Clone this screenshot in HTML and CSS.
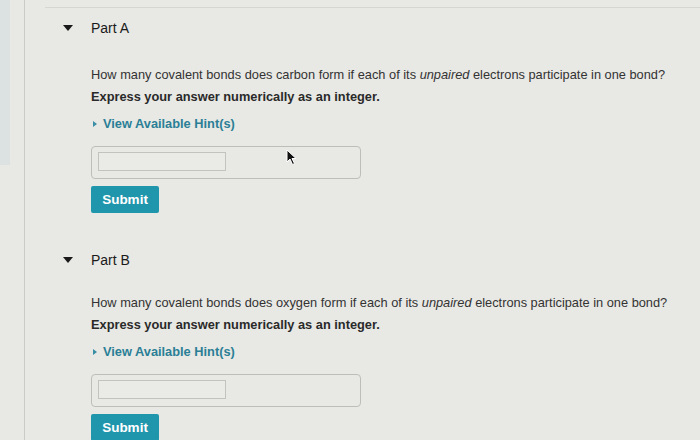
FILE: index.html
```html
<!DOCTYPE html>
<html>
<head>
<meta charset="utf-8">
<link rel="stylesheet" href="styles.css">
</head>
<body>
<div class="page">
  <div class="sidebar"><div class="strip"></div></div>
  <div class="main">
    <section class="part">
      <div class="part-head"><span class="caret"></span><span class="part-title">Part A</span></div>
      <div class="part-body">
        <p class="question">How many covalent bonds does carbon form if each of its <em>unpaired</em> electrons participate in one bond?</p>
        <p class="instr">Express your answer numerically as an integer.</p>
        <p class="hint"><span class="hint-caret"></span>View Available Hint(s)</p>
        <div class="answer-box"><div class="answer-input"></div></div>
        <button class="submit">Submit</button>
      </div>
      <svg class="cursor" width="12" height="17" viewBox="0 0 12 17"><path d="M1 1 L1 13 L4 10 L6.5 15.5 L8.5 14.5 L6 9.5 L10 9.5 Z" fill="#111" stroke="#fff" stroke-width="1"/></svg>
    </section>
    <section class="part part-b">
      <div class="part-head"><span class="caret"></span><span class="part-title">Part B</span></div>
      <div class="part-body">
        <p class="question">How many covalent bonds does oxygen form if each of its <em>unpaired</em> electrons participate in one bond?</p>
        <p class="instr">Express your answer numerically as an integer.</p>
        <p class="hint"><span class="hint-caret"></span>View Available Hint(s)</p>
        <div class="answer-box"><div class="answer-input"></div></div>
        <button class="submit">Submit</button>
      </div>
    </section>
  </div>
</div>
</body>
</html>
```
FILE: styles.css
```css
html, body {
  margin: 0;
  padding: 0;
  background: #e8e8e4;
  height: 100%;
  overflow: hidden;
}
body {
  font-family: "Liberation Sans", Arial, sans-serif;
  color: #222;
}
.page {
  display: flex;
  height: 440px;
}
.sidebar {
  width: 24px;
  border-right: 1px solid #cacbc8;
  flex: none;
}
.strip {
  width: 10px;
  height: 165px;
  background: #dce2e2;
}
.main {
  flex: 1;
  margin-left: 20px;
  border-top: 1px solid #d6d6d2;
  margin-top: 7px;
  padding-top: 10px;
}
.part {
  position: relative;
}
.part-head {
  display: flex;
  align-items: center;
  height: 20px;
  padding-left: 18px;
}
.caret {
  width: 0;
  height: 0;
  border-left: 5px solid transparent;
  border-right: 5px solid transparent;
  border-top: 6px solid #1a1a1a;
  margin-right: 18px;
}
.part-title {
  font-size: 14px;
  color: #1a1a1a;
}
.part-body {
  padding-left: 46px;
  padding-top: 26px;
}
.question, .instr, .hint {
  margin: 0;
  font-size: 12.8px;
  line-height: 22px;
}
.question {
  color: #333;
}
.instr {
  font-weight: bold;
  color: #2a2a2a;
}
.hint {
  margin-top: 5px;
  font-weight: bold;
  color: #2a7f96;
  display: flex;
  align-items: center;
}
.hint-caret {
  width: 0;
  height: 0;
  border-top: 3.5px solid transparent;
  border-bottom: 3.5px solid transparent;
  border-left: 4px solid #3a8ea5;
  margin-left: 2px;
  margin-right: 6px;
}
.answer-box {
  margin-top: 11px;
  width: 256px;
  height: 21px;
  padding: 5px 6px;
  border: 1px solid #bdbdba;
  border-radius: 4px;
}
.answer-input {
  width: 126px;
  height: 17px;
  border: 1px solid #c2c2be;
  background: #eaeae6;
}
.submit {
  display: block;
  margin-top: 7px;
  width: 68px;
  height: 27px;
  border: none;
  border-radius: 2px;
  background: #1f96ac;
  color: #fff;
  font-family: "Liberation Sans", Arial, sans-serif;
  font-weight: bold;
  font-size: 13.5px;
  padding: 0;
}
.part-b {
  margin-top: 37px;
}
.part-b .part-body {
  padding-top: 22px;
}
.cursor {
  position: absolute;
  left: 241px;
  top: 131px;
}
```
